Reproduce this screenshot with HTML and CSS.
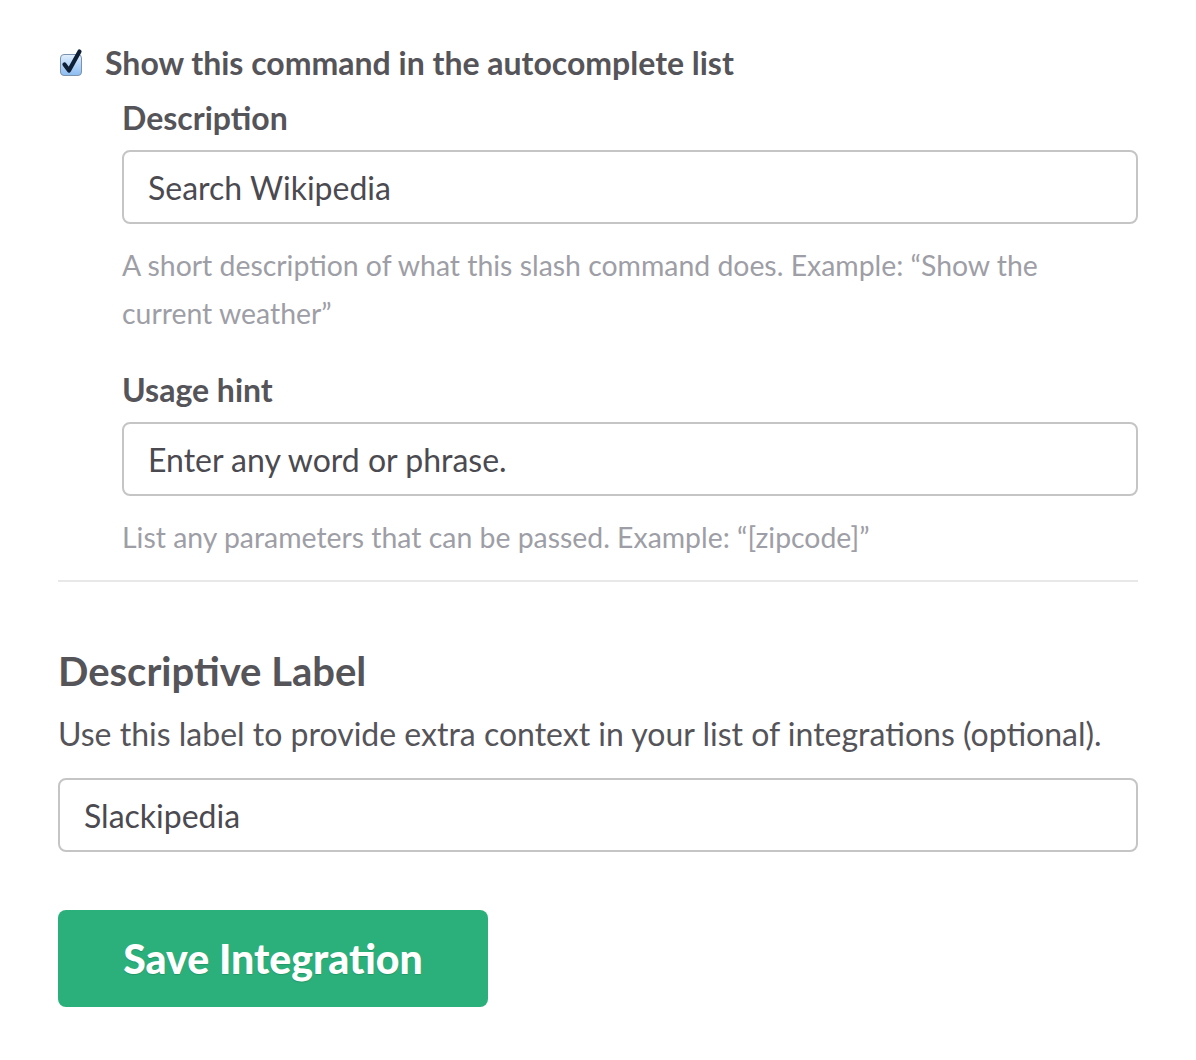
FILE: index.html
```html
<!DOCTYPE html>
<html>
<head>
<meta charset="utf-8">
<link rel="stylesheet" href="styles.css">
</head>
<body>
<div class="page">
  <label class="check-row">
    <span class="checkbox">
      <svg viewBox="0 0 26 28" width="26" height="28" aria-hidden="true">
        <defs>
          <linearGradient id="cbg" x1="0" y1="0" x2="0" y2="1">
            <stop offset="0" stop-color="#e3f0fd"/>
            <stop offset="0.5" stop-color="#b3d4f8"/>
            <stop offset="1" stop-color="#8cbcf1"/>
          </linearGradient>
        </defs>
        <rect x="2.5" y="6.5" width="21" height="21" rx="3.5" fill="url(#cbg)" stroke="#7d93ad" stroke-width="1"/>
        <path d="M6.5 16.5 L11 22.5 L21.5 3.5" fill="none" stroke="#0f1f36" stroke-width="4.2" stroke-linecap="round" stroke-linejoin="round"/>
      </svg>
    </span>
    <span class="check-text">Show this command in the autocomplete list</span>
  </label>

  <div class="sub">
    <div class="field">
      <div class="label">Description</div>
      <div class="input">Search Wikipedia</div>
      <p class="help">A short description of what this slash command does. Example: “Show the current weather”</p>
    </div>
    <div class="field">
      <div class="label">Usage hint</div>
      <div class="input">Enter any word or phrase.</div>
      <p class="help">List any parameters that can be passed. Example: “[zipcode]”</p>
    </div>
  </div>

  <hr class="sep">

  <h2 class="section-title">Descriptive Label</h2>
  <p class="section-desc">Use this label to provide extra context in your list of integrations (optional).</p>
  <div class="input input-small">Slackipedia</div>

  <button class="save">Save Integration</button>
</div>
</body>
</html>
```

FILE: styles.css
```css
html, body {
  margin: 0;
  padding: 0;
  background: #ffffff;
}
body {
  font-family: Lato, "Noto Sans", sans-serif;
  color: #555459;
}
.page {
  padding: 42px 58px 0 58px;
  width: 1080px;
}
.check-row {
  display: flex;
  align-items: center;
  gap: 21px;
  height: 40px;
}
.checkbox {
  display: flex;
  width: 26px;
  height: 28px;
  margin-top: -1px;
}
.check-text {
  font-weight: 700;
  font-size: 32px;
  color: #555459;
}
.sub {
  padding-left: 64px;
}
.field {
  display: flex;
  flex-direction: column;
}
.field + .field {
  margin-top: 17px;
}
.label {
  font-weight: 700;
  font-size: 32px;
  line-height: 40px;
  margin-top: 16px;
  margin-bottom: 12px;
}
.input {
  box-sizing: border-box;
  height: 74px;
  border: 2px solid #c5c5c5;
  border-radius: 8px;
  padding: 0 24px;
  display: flex;
  align-items: center;
  font-size: 32px;
  color: #4b4a50;
}
.help {
  margin: 17px 0 0 0;
  max-width: 950px;
  font-size: 28.4px;
  line-height: 48px;
  color: #9e9ea6;
}
.sep {
  border: 0;
  border-top: 2px solid #e8e8e8;
  margin: 19px 0 0 0;
}
.section-title {
  margin: 65px 0 0 0;
  font-size: 40px;
  font-weight: 700;
  line-height: 48px;
  color: #555459;
}
.section-desc {
  margin: 19px 0 0 0;
  font-size: 32px;
  line-height: 40px;
  color: #555459;
}
.input-small {
  margin-top: 24px;
}
.save {
  display: block;
  margin-top: 58px;
  width: 430px;
  height: 97px;
  border: 0;
  border-radius: 8px;
  background: #2bb07b;
  color: #ffffff;
  font-family: Lato, "Noto Sans", sans-serif;
  font-weight: 900;
  font-size: 41px;
  padding: 0;
  text-shadow: 0 1px 1px rgba(0,0,0,0.15);
}
```
